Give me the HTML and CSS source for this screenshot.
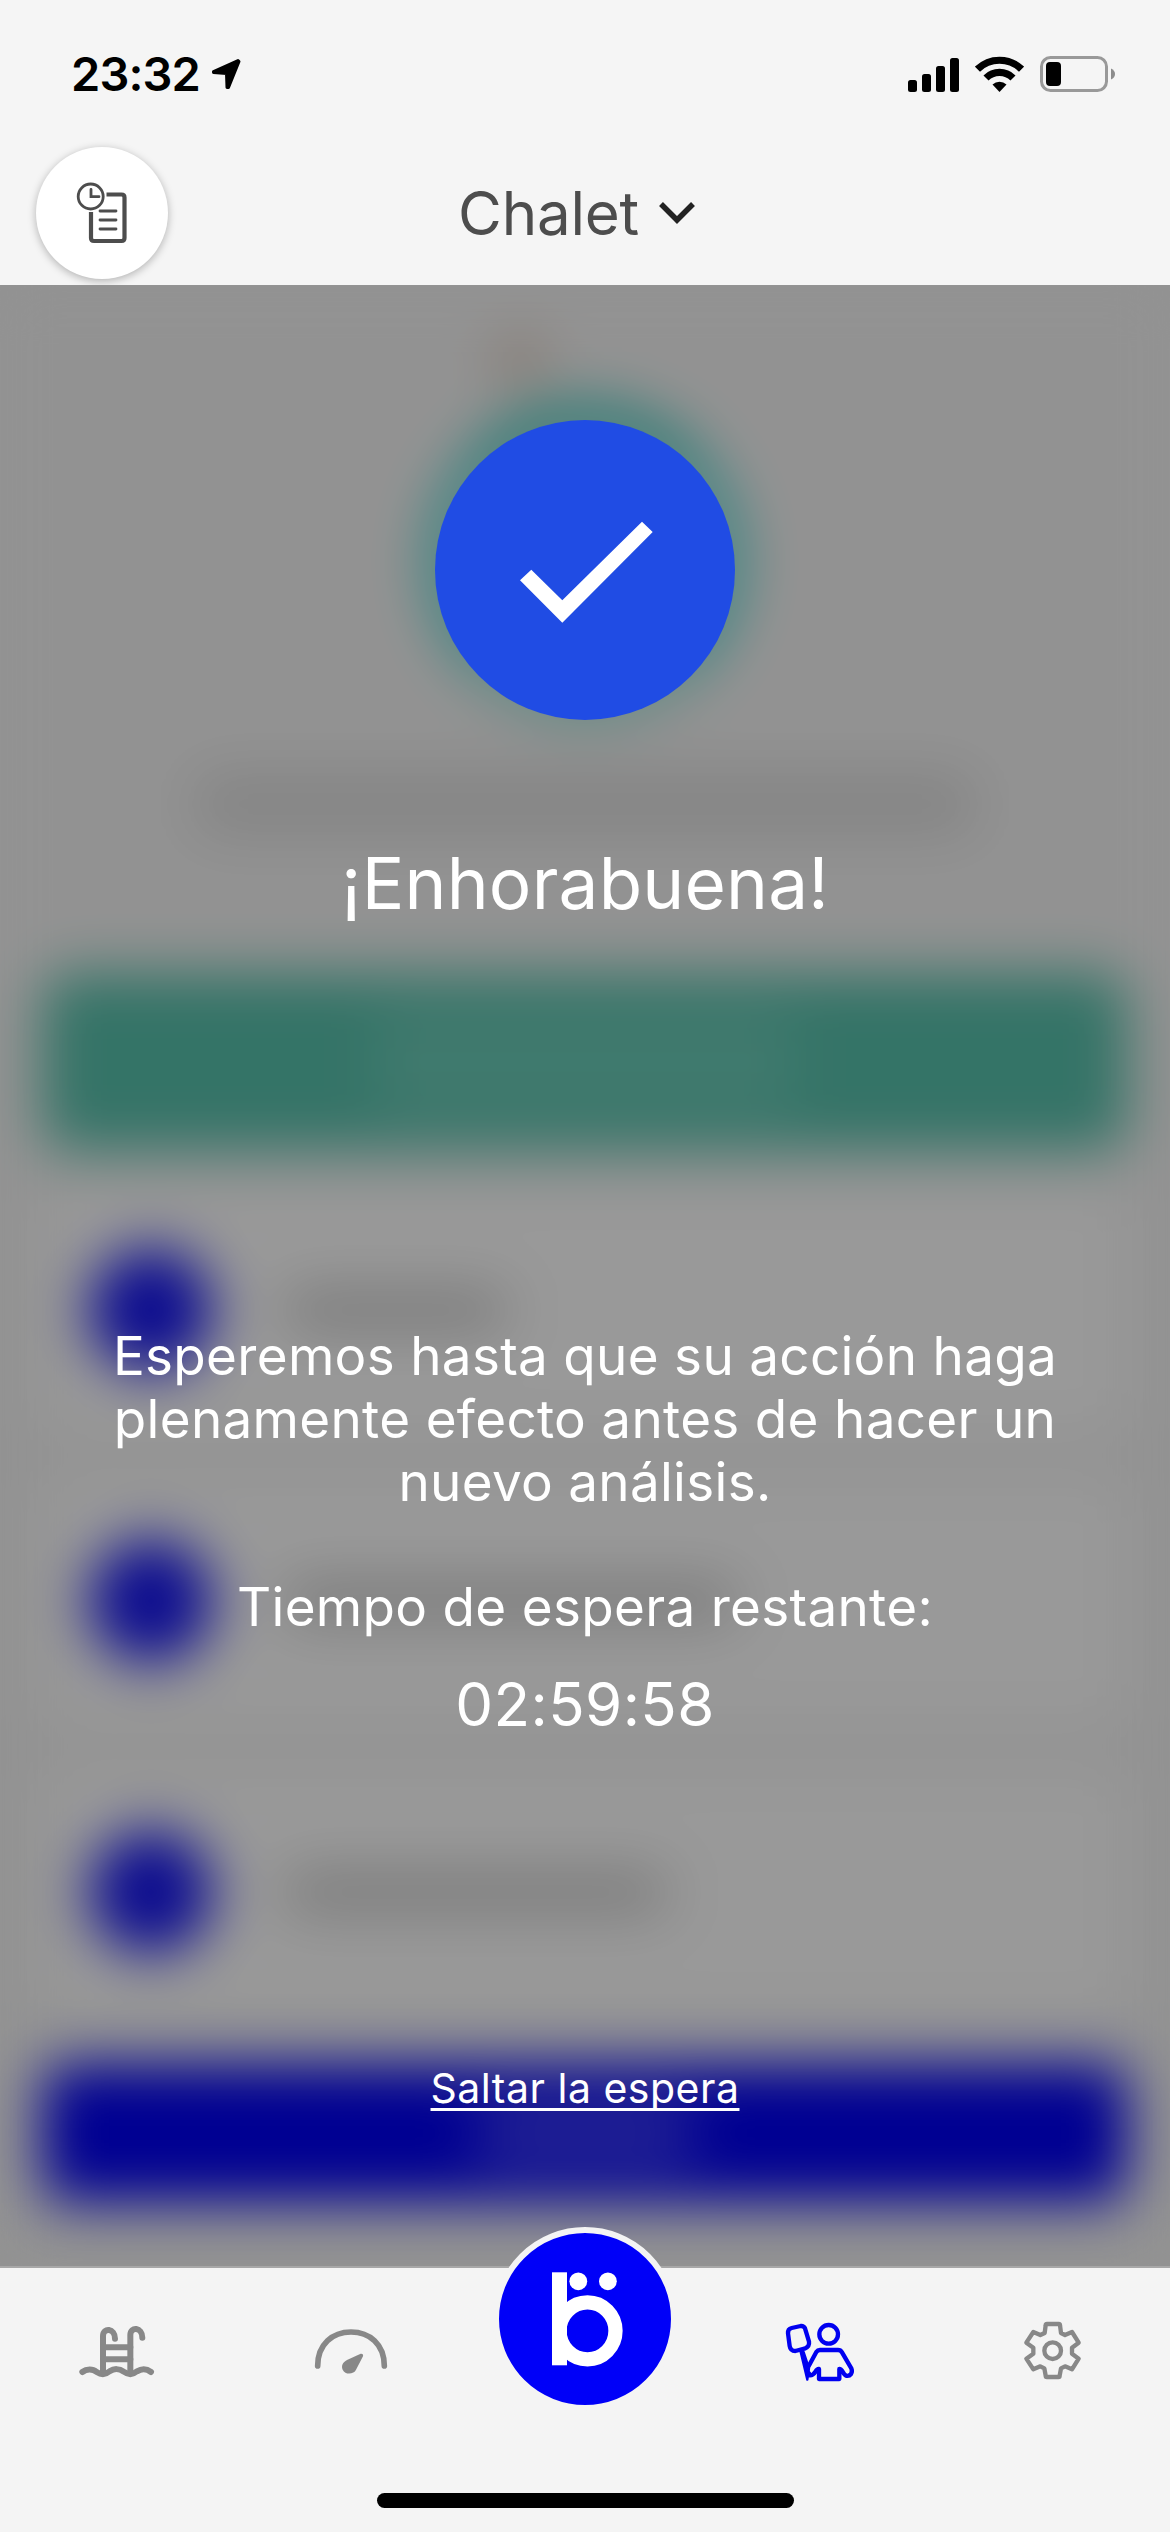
FILE: index.html
```
<!DOCTYPE html>
<html lang="es">
<head>
    <meta charset="UTF-8">
    <meta name="viewport" content="width=device-width, initial-scale=1.0">
    <title>Chalet</title>
    <link rel="stylesheet" href="styles.css">
</head>
<body>
    <div class="status-bar">
        <span class="clock">23:32</span>
        <svg class="location" viewBox="0 0 30 32"><path d="M27 2.5 L2.5 13.5 L2.5 14.5 L15.5 15.5 L16 29.5 L17.5 29.5 L28 3.5 Z" fill="#000" stroke="#000" stroke-width="3" stroke-linejoin="round"/></svg>
        <div class="status-icons">
            <svg width="51" height="36" viewBox="0 0 51 36">
                <rect x="0" y="24" width="9" height="12" rx="2.5"/>
                <rect x="14" y="18" width="9" height="18" rx="2.5"/>
                <rect x="28" y="10" width="9" height="26" rx="2.5"/>
                <rect x="42" y="2" width="9" height="34" rx="2.5"/>
            </svg>
            <svg width="49" height="36" viewBox="0 0 49 36">
                <g fill="none" stroke="#000" stroke-width="7.2">
                    <path d="M2.5 13.2 A31.5 31.5 0 0 1 46.5 13.2"/>
                    <path d="M11 22 A19.2 19.2 0 0 1 38 22"/>
                </g>
                <path d="M17.5 28.5 A10.5 10.5 0 0 1 31.5 28.5 L24.5 36 Z"/>
            </svg>
            <svg width="76" height="36" viewBox="0 0 76 36">
                <rect x="1.5" y="1.5" width="65" height="33" rx="9" fill="none" stroke="#999" stroke-width="3"/>
                <rect x="6" y="6" width="15" height="24" rx="4"/>
                <path d="M71 12.5 Q75 14.5 75 18 Q75 21.5 71 23.5 Z" fill="#8c8c8c"/>
            </svg>
        </div>
    </div>

    <header>
        <button class="history-button">
            <svg viewBox="69 180 66 66" fill="none" stroke="#4d4d4d">
                <path d="M106.5 194.5 H121.5 Q124.5 194.5 124.5 197.5 V238 Q124.5 241 121.5 241 H94 Q91 241 91 238 V212" stroke-width="4.2"/>
                <path d="M100 211 H116 M100 220 H116 M100 229 H116" stroke-width="2.8" stroke-linecap="round"/>
                <circle cx="90.7" cy="196.5" r="12.5" stroke-width="2.8"/>
                <path d="M91 189.5 V196.7 H99" stroke-width="2.8" stroke-linecap="round"/>
            </svg>
        </button>
        <div class="site-name">Chalet</div>
        <svg class="chevron" viewBox="0 0 36 24"><path d="M2 3 L18 19 L34 3" fill="none" stroke="#222" stroke-width="5.5"/></svg>
    </header>

    <main>
        <!-- Screen underneath, blurred out while waiting -->
        <div class="backdrop">
            <div class="ring"></div>
            <div class="bar heading"></div>
            <div class="banner"><div class="bar"></div></div>
            <div class="card"><span class="dot"></span><span class="bar short"></span></div>
            <div class="card"><span class="dot"></span><span class="bar long"></span></div>
            <div class="card"><span class="dot"></span><span class="bar medium"></span></div>
            <div class="action"><div class="bar"></div></div>
        </div>

        <div class="overlay">
            <div class="check">
                <svg viewBox="435 420 300 300"><polygon points="520,580.3 531.3,569.7 562.3,600.3 642,521.7 652.7,532 562.3,622.7" fill="#fff"/></svg>
            </div>
            <h1>¡Enhorabuena!</h1>
            <p class="message">Esperemos hasta que su acción haga<br>plenamente efecto antes de hacer un<br>nuevo análisis.</p>
            <p class="remaining">Tiempo de espera restante:</p>
            <p class="timer">02:59:58</p>
            <a class="skip" href="#">Saltar la espera</a>
        </div>
    </main>

    <nav>
        <div class="tabs">
            <svg class="tab" viewBox="-9 0 360 360" fill="none" stroke="#888" stroke-width="18" stroke-linecap="round">
                <path d="M129 250 V138 C129 112 165 114 165 146"/>
                <path d="M211 250 V135 C211 109 247 111 247 143"/>
                <path d="M130 172 H211 M130 208 H211"/>
                <path d="M67 246 C80 236 98 236 110 246 C124 255 136 255 149 244 C162 235 178 235 191 245 C205 255 218 255 231 244 C244 236 260 236 273 246"/>
            </svg>
            <svg class="tab" viewBox="873 210 360 360">
                <path d="M953 438 C953 372 998 336 1053 336 C1108 336 1153 372 1153 438" fill="none" stroke="#888" stroke-width="17" stroke-linecap="round"/>
                <path d="M1041 420 L1082 401 Q1091 400 1089 409 L1068 449 C1062 463 1036 466 1028 449 C1023 438 1028 427 1041 420 Z" fill="#888"/>
            </svg>
            <div class="home-button">
                <svg viewBox="499 2232.7 172 172" fill="#fff">
                    <rect x="552" y="2272" width="15" height="93"/>
                    <ellipse cx="587.5" cy="2330.5" rx="28" ry="28.5" fill="none" stroke="#fff" stroke-width="14.3"/>
                    <circle cx="578.3" cy="2281" r="8.9"/>
                    <circle cx="607.9" cy="2281" r="8.9"/>
                </svg>
            </div>
            <svg class="tab" viewBox="-3 0 360 360" fill="none" stroke="#0000f0" stroke-width="13" stroke-linejoin="round" stroke-linecap="round">
                <path d="M95 114 L122 108 Q131 107 135 115 L147 155 Q149 169 136 175 L106 183 Q91 183 89 168 L84 130 Q83 117 95 114 Z"/>
                <path d="M122 186 L142 269 L147 235 L131 186 Z" stroke-width="7" fill="#0000f0"/>
                <circle cx="206" cy="133" r="28"/>
                <path d="M147 250 C139 245 141 236 145 230 L169 186 Q173 180 180 180 H234 Q242 180 246 187 L274 235 C279 249 271 260 258 257 C247 250 248 237 238 237 V267 H177 V237 C165 235 167 260 147 256"/>
            </svg>
            <svg class="tab" viewBox="759 150 360 360" fill="none" stroke="#888" stroke-width="13" stroke-linejoin="round">
                <path d="M921 252 H956 Q960 252 960 256 L963 279 L975 285 L996 276 L1016 308 L996 323 V341 L1016 356 L996 388 L975 379 L963 385 L959 407 Q959 411 955 411 H921 Q917 411 917 407 L913 385 L901 379 L880 388 L859 356 L880 341 V323 L859 308 L880 276 L901 285 L914 279 L917 256 Q917 252 921 252 Z"/>
                <circle cx="938" cy="332" r="25"/>
            </svg>
        </div>
        <div class="home-indicator"></div>
    </nav>
</body>
</html>
```

FILE: styles.css
```
* {
    margin: 0;
    padding: 0;
    box-sizing: border-box;
    font-family: Inter, 'Liberation Sans', sans-serif;
}

body {
    background-color: #f5f5f5;
    width: 1170px;
    height: 2532px;
    overflow: hidden;
    display: flex;
    flex-direction: column;
}

svg {
    display: block;
    flex-shrink: 0;
}

/* Status bar */
.status-bar {
    height: 147px;
    padding: 0 54px 0 71px;
    display: flex;
    align-items: center;
}

.clock {
    font-size: 47px;
    font-weight: 600;
    letter-spacing: -0.9px;
    width: 140px;
}

.location {
    width: 30px;
    height: 32px;
}

.status-icons {
    margin-left: auto;
    display: flex;
    align-items: center;
    gap: 16px;
}

/* Header */
header {
    height: 138px;
    padding: 0 36px;
    display: flex;
    align-items: center;
    padding-bottom: 6px;
}

.history-button {
    width: 132px;
    height: 132px;
    border: none;
    border-radius: 50%;
    background-color: #fff;
    box-shadow: 0 2px 8px rgba(0, 0, 0, 0.28);
    display: flex;
    align-items: center;
    justify-content: center;
}

.history-button svg {
    width: 66px;
    height: 66px;
}

.site-name {
    margin-left: 290px;
    width: 201px;
    font-size: 60px;
    line-height: 72px;
    letter-spacing: -0.2px;
    color: #4d4d4d;
}

.chevron {
    width: 36px;
    height: 24px;
}

/* Main screen */
main {
    position: relative;
    height: 1983px;
    background-color: #f4f4f4;
    overflow: hidden;
}

.backdrop {
    position: absolute;
    inset: 0;
    padding: 121px 42px 0;
    display: flex;
    flex-direction: column;
    align-items: center;
    background: radial-gradient(circle at 520px 75px, #dcc8b8 0, #dcc8b8 24px, transparent 25px) #f4f4f4;
    filter: blur(28px);
}

.ring {
    width: 310px;
    height: 310px;
    border-radius: 50%;
    border: 30px solid #30d4ce;
    border-top-color: #08bfb0;
    border-bottom-color: #80e0d4;
}

.bar {
    height: 40px;
    border-radius: 20px;
    background-color: #cacaca;
}

.heading {
    width: 780px;
    height: 60px;
    margin-top: 58px;
    background-color: #dcdcdc;
}

.banner,
.action {
    width: 1086px;
    display: flex;
    align-items: center;
    justify-content: center;
    flex-shrink: 0;
}

.banner {
    height: 178px;
    margin-top: 139px;
    border-radius: 30px;
    background-color: #58c1ac;
}

.banner .bar {
    width: 420px;
    height: 110px;
    background-color: #6bcbb7;
}

.card {
    width: 1086px;
    height: 250px;
    margin-top: 34px;
    padding: 0 47px;
    border-radius: 30px;
    background-color: #fff;
    display: flex;
    align-items: center;
    gap: 70px;
    flex-shrink: 0;
}

.card + .card {
    margin-top: 41px;
}

.dot {
    width: 124px;
    height: 124px;
    border-radius: 50%;
    background-color: #1414f0;
}

.short {
    width: 225px;
}

.long {
    width: 455px;
}

.medium {
    width: 385px;
}

.action {
    height: 138px;
    margin-top: 47px;
    border-radius: 24px;
    background-color: #0000f4;
}

.action .bar {
    width: 220px;
    height: 60px;
    background-color: #4040f6;
}

/* Waiting overlay */
.overlay {
    position: absolute;
    inset: 0;
    padding-top: 135px;
    display: flex;
    flex-direction: column;
    align-items: center;
    background-color: rgba(0, 0, 0, 0.4);
    color: #fff;
    text-align: center;
}

.check {
    width: 300px;
    height: 300px;
    border-radius: 50%;
    background-color: #204ce4;
}

h1 {
    margin-top: 120px;
    font-size: 71px;
    line-height: 86px;
    font-weight: 400;
    letter-spacing: 0.2px;
}

.message,
.remaining {
    font-size: 53px;
    line-height: 63px;
    letter-spacing: 0.3px;
}

.message {
    margin-top: 399px;
}

.remaining {
    margin-top: 62px;
}

.timer {
    margin-top: 29px;
    font-size: 60px;
    line-height: 72px;
    letter-spacing: 0.4px;
}

.skip {
    margin-top: 324px;
    font-size: 41px;
    line-height: 48px;
    letter-spacing: 0.5px;
    color: #fff;
    text-decoration-thickness: 3px;
    text-underline-offset: 5px;
    text-decoration-skip-ink: none;
}

/* Bottom navigation */
nav {
    position: relative;
    height: 264px;
    background-color: #f4f4f4;
    box-shadow: 0 -2px 0 #a8a8a8;
    display: flex;
    flex-direction: column;
    align-items: center;
}

.tabs {
    width: 1170px;
    height: 225px;
    display: grid;
    grid-template-columns: repeat(5, 1fr);
    justify-items: center;
    align-items: start;
}

.tab {
    width: 120px;
    height: 120px;
    margin-top: 22px;
}

.home-button {
    width: 184px;
    height: 184px;
    margin-top: -41px;
    border: 6px solid #f4f4f4;
    border-radius: 50%;
    background-color: #0000f8;
}

.home-indicator {
    width: 417px;
    height: 15px;
    border-radius: 8px;
    background-color: #000;
}
```
